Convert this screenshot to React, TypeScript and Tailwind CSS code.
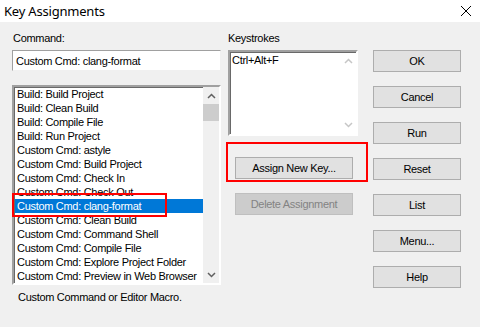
const commands = [
  "Build: Build Project",
  "Build: Clean Build",
  "Build: Compile File",
  "Build: Run Project",
  "Custom Cmd: astyle",
  "Custom Cmd: Build Project",
  "Custom Cmd: Check In",
  "Custom Cmd: Check Out",
  "Custom Cmd: clang-format",
  "Custom Cmd: Clean Build",
  "Custom Cmd: Command Shell",
  "Custom Cmd: Compile File",
  "Custom Cmd: Explore Project Folder",
  "Custom Cmd: Preview in Web Browser",
]

const sideButtons = ["OK", "Cancel", "Run", "Reset", "List", "Menu...", "Help"]

function Chevron({ up, color }: { up?: boolean; color: string }) {
  return (
    <svg width="9" height="6" viewBox="0 0 9 6">
      <path
        d={up ? "M1 5 L4.5 1.5 L8 5" : "M1 1 L4.5 4.5 L8 1"}
        fill="none"
        stroke={color}
        strokeWidth="1.5"
      />
    </svg>
  )
}

function Button({ label, disabled }: { label: string; disabled?: boolean }) {
  return (
    <div
      className={
        disabled
          ? "h-[22px] flex items-center justify-center border border-[#bfbfbf] bg-[#cccccc] text-[#838383]"
          : "h-[22px] flex items-center justify-center border border-[#adadad] bg-[#e1e1e1] text-black"
      }
    >
      {label}
    </div>
  )
}

export default function App() {
  return (
    <div
      className="w-[480px] h-[327px] bg-[#f0f0f0] flex flex-col overflow-hidden text-[11px] leading-[14px] tracking-[-0.3px] text-black"
      style={{ fontFamily: '"Liberation Sans", Arial, sans-serif' }}
    >
      {/* Title bar */}
      <div className="h-[22px] bg-white flex items-center justify-between pl-[4px] pr-[8px] shrink-0">
        <span
          className="text-[13px] leading-[18px] tracking-[-0.2px] text-black"
          style={{ fontFamily: '"Noto Sans", sans-serif' }}
        >
          Key Assignments
        </span>
        <svg width="12" height="12" viewBox="0 0 12 12">
          <path d="M1 1 L11 11 M11 1 L1 11" stroke="#000" strokeWidth="1" />
        </svg>
      </div>

      <div className="flex pl-[12px] pt-[9px]">
        {/* Left column */}
        <div className="w-[209px] flex flex-col">
          <div className="h-[14px] pl-[1px]">Command:</div>
          <div className="mt-[5px] h-[21px] bg-white border border-t-[#a0a0a0] border-l-[#a0a0a0] border-r-[#f0f0f0] border-b-[#f0f0f0] flex items-center pl-[3px]">
            Custom Cmd: clang-format
          </div>
          <div className="relative mt-[14px] h-[200px] bg-white border-2 border-t-[#a0a0a0] border-l-[#a0a0a0] border-r-white border-b-white shadow-[inset_1px_1px_0_#696969] flex">
            <div className="flex-1 flex flex-col pl-[1px] overflow-hidden">
              {commands.map((c) => (
                <div
                  key={c}
                  className={
                    c === "Custom Cmd: clang-format"
                      ? "h-[14px] shrink-0 pl-[2px] bg-[#0078d7] text-white whitespace-nowrap"
                      : "h-[14px] shrink-0 pl-[2px] whitespace-nowrap"
                  }
                >
                  {c}
                </div>
              ))}
            </div>
            {/* Scrollbar */}
            <div className="w-[16px] bg-[#f0f0f0] flex flex-col items-center">
              <div className="h-[17px] flex items-center justify-center">
                <Chevron up color="#606060" />
              </div>
              <div className="w-[16px] h-[17px] bg-[#cdcdcd]" />
              <div className="flex-1" />
              <div className="h-[17px] flex items-center justify-center">
                <Chevron color="#606060" />
              </div>
            </div>
            {/* Annotation */}
            <div className="absolute left-[-2px] top-[106px] w-[155px] h-[24px] border-2 border-[#ff0000]" />
          </div>
          <div className="mt-[5px] pl-[6px]">Custom Command or Editor Macro.</div>
        </div>

        {/* Middle column */}
        <div className="ml-[7px] w-[130px] flex flex-col">
          <div className="h-[14px]">Keystrokes</div>
          <div className="mt-[5px] h-[86px] bg-white border-2 border-t-[#a0a0a0] border-l-[#a0a0a0] border-r-white border-b-white shadow-[inset_1px_1px_0_#696969] flex">
            <div className="flex-1 pl-[2px] pt-[1px]">Ctrl+Alt+F</div>
            <div className="w-[16px] flex flex-col items-center justify-between py-[6px]">
              <Chevron up color="#c6c6c6" />
              <Chevron color="#c6c6c6" />
            </div>
          </div>
          <div className="relative mt-[21px] ml-[7px] w-[118px]">
            <Button label="Assign New Key..." />
            <div className="absolute left-[-9px] top-[-15px] w-[142px] h-[40px] border-2 border-[#ff0000]" />
          </div>
          <div className="mt-[14px] ml-[7px] w-[118px]">
            <Button label="Delete Assignment" disabled />
          </div>
        </div>

        {/* Right column */}
        <div className="ml-[15px] w-[88px] flex flex-col gap-[14px] pt-[19px]">
          {sideButtons.map((b) => (
            <Button key={b} label={b} />
          ))}
        </div>
      </div>
    </div>
  )
}
